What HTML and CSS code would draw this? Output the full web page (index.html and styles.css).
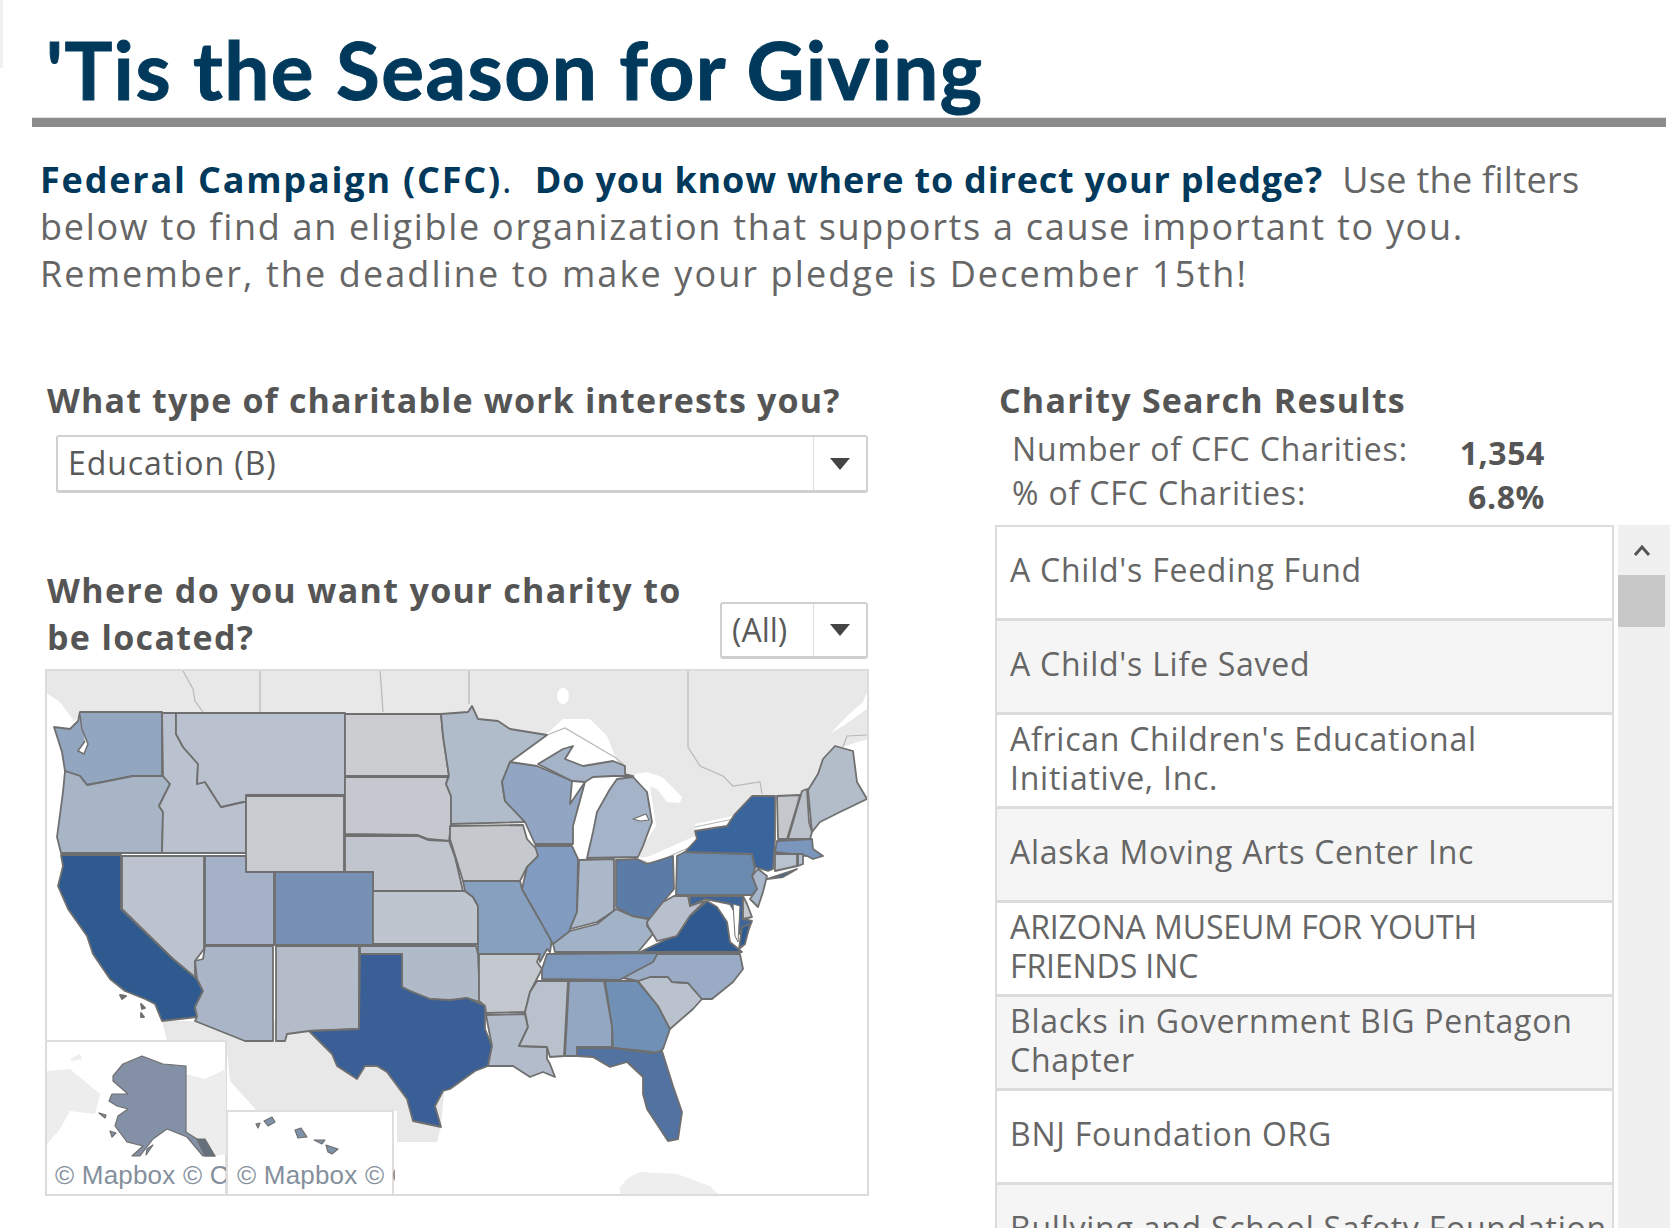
FILE: index.html
```html
<!DOCTYPE html>
<html lang="en">
<head>
<meta charset="utf-8">
<title>'Tis the Season for Giving</title>
<link rel="stylesheet" href="styles.css">
</head>
<body>
<div class="edge"></div>
<header class="top">
  <h1 class="title">'Tis the Season for Giving</h1>
  <div class="rule"></div>
  <p class="intro"><span class="l1"><strong class="s1">Federal Campaign (CFC)</strong><b class="dot">.</b>&nbsp; <strong class="s2">Do you know where to direct your pledge?</strong>&nbsp; Use the filters</span><br><span class="l2">below to find an eligible organization that supports a cause important to you.</span><br><span class="l3">Remember, the deadline to make your pledge is December 15th!</span></p>
</header>
<main class="columns">
  <section class="left">
    <h2 class="heading q1">What type of charitable work interests you?</h2>
    <div class="select wide"><span class="val">Education (B)</span><span class="btn"><i class="tri"></i></span></div>
    <div class="where">
      <h2 class="heading q2">Where do you want your charity to<br>be located?</h2>
      <div class="select small"><span class="val">(All)</span><span class="btn"><i class="tri"></i></span></div>
    </div>
    <div class="map">
      <svg class="mapsvg" viewBox="45 670 824 527" width="824" height="527" xmlns="http://www.w3.org/2000/svg">
        <g class="land">
          <polygon points="45,670 868,670 868,740 835,750 815,780 805,800 760,800 735,817 697,840 650,860 640,858 640,800 620,770 515,760 450,720 80,716 74,722 60,703 45,693"/>
          <polygon points="162,1022 450,1022 441,1128 437,1143 397,1143 397,1112 257,1112 230,1082 226,1042 167,1042"/>
          <polygon points="620,1188 628,1179 640,1173 677,1175 710,1187 718,1195 620,1195" class="faint"/>
        </g>
        <g class="water">
          <polygon points="515,760 550,732 563,720 590,720 607,737 615,757 620,770 560,770"/>
          <ellipse cx="563" cy="697" rx="6" ry="8"/>
          <polygon points="635,775 647,773 662,778 682,798 680,804 667,803 657,790 650,787 656,827 643,847"/>
          <polygon points="638,860 652,863 697,842 695,825 733,817 735,823 697,831 695,837 650,857"/>
          <polygon points="830,735 847,717 863,703 867,693 867,710 843,727"/>
        </g>
        <g class="borders">
          <polyline points="182,670 193,690 195,702 203,713"/>
          <polyline points="260,670 260,713"/>
          <polyline points="380,670 383,713"/>
          <polyline points="469,670 469,705"/>
          <polyline points="688,670 688,748 700,767 723,777 733,787 760,783 762,795"/>
          <polyline points="843,748 847,737 867,736"/>
          <polyline points="547,736 565,729 616,759 625,767"/>
          <polyline points="638,860 652,865 697,845" />
          <polyline points="695,828 733,820 736,815" />
        </g>
        <g class="states">
          <polygon fill="#92a6c0" points="54,728 70,730 78,722 80,713 162,713 162,777 133,777 103,783 87,786 80,777 65,772 62,753"/>
          <polyline class="sound" points="80,716 82,730 88,745 84,755 78,752 85,742"/>
          <polygon fill="#a7b5c7" points="65,772 80,777 87,786 103,783 133,777 163,777 170,785 159,807 163,813 162,854 61,854 57,838 63,793"/>
          <polygon fill="#b9c2ce" points="162,714 176,714 176,735 183,748 198,765 197,785 205,783 221,808 243,803 246,803 246,854 162,854 163,813 159,807 170,785 163,777"/>
          <polygon fill="#b8c1cd" points="176,714 345,714 345,796 246,796 246,803 243,803 221,808 205,783 197,785 198,765 183,748 176,735"/>
          <polygon fill="#c8cbd0" points="246,797 344,797 344,873 246,873"/>
          <polygon fill="#cbcdd1" points="345,715 441,715 443,737 449,777 345,777"/>
          <polygon fill="#c5c8cf" points="345,778 448,778 446,785 451,797 451,825 449,842 428,840 418,836 345,835"/>
          <polygon fill="#c0c5ce" points="345,837 418,837 428,841 449,842 455,858 463,892 373,892 373,873 345,873"/>
          <polygon fill="#7790b3" points="275,873 373,873 373,946 275,946"/>
          <polygon fill="#a5b1c6" points="205,857 246,857 246,873 274,873 274,946 205,946"/>
          <polygon fill="#bcc3ce" points="122,857 204,857 204,950 195,962 195,975 197,980 173,960 122,910"/>
          <polygon fill="#2e5a8f" points="61,856 121,856 121,910 173,960 197,980 203,992 195,1008 197,1018 162,1022 155,1005 145,1000 125,992 110,980 93,955 87,937 68,910 58,887 63,867"/>
          <polygon fill="#aab5c8" points="205,947 273,947 273,1042 245,1042 195,1022 197,1018 195,1008 203,992 197,980 195,962 203,960"/>
          <polygon fill="#b4bcc9" points="276,947 359,947 359,1030 309,1032 287,1035 285,1042 276,1042"/>
          <polygon fill="#b0bac8" points="360,947 476,947 478,955 480,1003 467,999 450,1002 430,1000 410,992 402,988 402,955 360,955"/>
          <polygon fill="#395f96" points="360,955 402,955 402,988 410,992 430,1000 450,1001 467,999 485,1007 485,1030 492,1047 488,1067 475,1072 450,1090 443,1092 435,1107 441,1128 413,1122 407,1100 387,1073 377,1067 365,1067 357,1080 337,1067 332,1055 309,1032 359,1030"/>
          <polygon fill="#bfc5cf" points="373,892 465,892 473,898 478,907 478,945 373,945"/>
          <polygon fill="#87a0c0" points="463,882 520,882 522,890 538,918 552,940 550,953 547,950 540,963 538,955 478,955 478,907 473,898 465,892"/>
          <polygon fill="#c5c9ce" points="450,827 523,826 527,840 539,853 537,863 527,868 520,882 463,882 450,840"/>
          <polygon fill="#b1bccb" points="441,715 468,713 472,707 478,720 498,722 510,730 547,736 510,763 502,783 505,802 525,823 451,825 451,797 446,785 449,777 443,737"/>
          <polygon fill="#92a6c3" points="510,763 537,767 572,782 570,805 585,783 573,827 573,845 535,845 525,823 505,802 502,783"/>
          <polygon fill="#a4b3c8" points="538,765 563,750 573,747 565,760 583,767 613,762 625,767 625,775 633,777 613,777 593,778 585,783 572,782"/>
          <polygon fill="#a4b3c8" points="617,780 633,778 647,793 652,823 643,847 638,858 587,859 593,833 597,813 610,790"/>
          <polygon class="notch" points="633,820 646,815 649,821 640,822"/>
          <polygon fill="#819cc0" points="535,847 572,847 578,860 577,913 570,930 567,943 553,945 538,918 522,890 527,868 538,857"/>
          <polygon fill="#aab8ca" points="579,861 614,860 614,912 597,923 570,930 577,913"/>
          <polygon fill="#5c7ca8" points="616,861 637,860 647,865 673,857 674,890 663,903 650,920 632,917 616,908"/>
          <polygon fill="#a2b3c8" points="616,910 632,917 648,920 647,927 653,935 638,953 570,953 555,953 553,945 570,932 597,925"/>
          <polygon fill="#b8c0cd" points="647,923 663,903 674,897 688,897 690,907 705,902 690,917 677,937 657,942 648,927"/>
          <polygon fill="#3f6498" points="690,897 743,897 743,920 752,922 745,940 740,935 736,915 730,905 705,900 690,907"/>
          <polygon fill="#2e5a90" points="640,953 667,940 677,937 690,917 707,902 717,908 727,923 730,943 742,953"/>
          <polygon fill="#c5c8cc" points="743,897 747,905 752,918 743,920"/>
          <polygon fill="#a7b6cb" points="752,877 758,870 767,877 763,893 758,908 750,900 757,890"/>
          <polygon fill="#6a8ab0" points="677,857 685,853 752,855 755,870 752,877 757,890 752,896 676,896"/>
          <polygon fill="#3a659c" points="685,853 697,840 695,832 727,827 735,815 752,797 775,797 775,840 773,870 768,872 755,868 752,855"/>
          <polygon fill="#3a659c" points="767,880 797,870 783,878"/>
          <polygon fill="#c4c7cb" points="777,797 800,796 797,807 787,840 778,840"/>
          <polygon fill="#bbc1ca" points="802,792 807,790 809,823 812,833 810,840 788,840"/>
          <polygon fill="#b3bdc9" points="808,791 818,775 823,760 835,747 853,752 857,783 867,800 840,813 820,823 812,833"/>
          <polygon fill="#7b96bc" points="777,842 812,840 813,850 823,857 813,860 807,857 775,853"/>
          <polygon fill="#b8c2cf" points="775,855 797,855 797,867 775,872"/>
          <polygon fill="#b3bece" points="798,855 803,855 803,865 798,867"/>
          <polygon fill="#c3c7ce" points="479,955 540,955 537,963 542,970 530,993 525,1013 486,1014 485,1007 479,1002"/>
          <polygon fill="#b3bccb" points="486,1016 525,1015 528,1028 519,1047 547,1048 547,1060 550,1065 555,1078 543,1073 530,1078 513,1067 488,1067 492,1047"/>
          <polygon fill="#b9c1cd" points="537,982 568,982 564,1057 550,1058 547,1048 519,1047 528,1028 525,1013 530,993"/>
          <polygon fill="#93a7c3" points="569,982 604,982 612,1027 612,1048 577,1048 578,1057 565,1057"/>
          <polygon fill="#7090b5" points="605,982 637,982 658,1007 670,1030 663,1050 653,1057 653,1053 613,1049 612,1027"/>
          <polygon fill="#5273a2" points="577,1049 613,1049 653,1054 662,1052 673,1087 682,1113 678,1140 668,1142 647,1110 643,1095 643,1078 627,1063 610,1068 593,1058 577,1057"/>
          <polygon fill="#bac2cd" points="638,982 650,978 668,978 672,983 688,984 702,1000 693,1010 670,1030 658,1007"/>
          <polygon fill="#99abc5" points="623,979 658,955 740,955 743,970 733,983 712,1000 702,1000 688,984 672,983 668,978 650,978 638,982"/>
          <polygon fill="#7d98bb" points="547,955 658,954 653,963 623,979 620,981 542,980 542,970"/>
          <polygon class="chesa" points="733,905 735,937 738,943 740,907"/>
          <polygon fill="#2e5a90" points="742,928 750,925 745,945 739,950"/>
          <polygon fill="#5c6470" points="120,996 126,997 122,1000"/>
          <polygon fill="#5c6470" points="141,1005 145,1009 142,1010"/>
          <polygon fill="#5c6470" points="141,1014 144,1018 141,1018"/>
        </g>
        <g class="inset">
          <rect x="46" y="1042" width="180" height="154"/>
          <rect x="227" y="1112" width="166" height="84"/>
        </g>
        <g class="land pale">
          <polygon points="47,1072 70,1070 100,1095 95,1115 70,1112 60,1130 47,1145"/>
          <polygon points="186,1075 205,1080 226,1070 226,1155 215,1157 186,1133"/>
          <polygon points="70,1060 80,1055 82,1060 72,1062"/>
        </g>
        <g class="states ak">
          <polygon fill="#8490a6" points="113,1077 123,1065 142,1057 163,1065 186,1067 186,1133 197,1140 215,1157 203,1157 187,1138 167,1130 153,1140 140,1157 132,1157 143,1147 127,1143 115,1127 118,1117 128,1110 117,1107 109,1102 112,1095 128,1095 113,1082"/>
          <polygon fill="#666f7c" points="197,1140 205,1140 215,1157 205,1157"/>
          <polygon fill="#7f92ac" points="264,1122 272,1118 275,1123 268,1127"/>
          <polygon fill="#7f92ac" points="256,1125 260,1124 258,1129"/>
          <polygon fill="#7f92ac" points="295,1131 301,1129 307,1138 298,1139"/>
          <polygon fill="#7f92ac" points="314,1141 325,1141 322,1145"/>
          <polygon fill="#7f92ac" points="326,1146 338,1150 332,1155 328,1153"/>
          <polygon fill="#7f92ac" points="99,1114 106,1116 105,1119"/>
          <polygon fill="#7f92ac" points="110,1132 116,1134 112,1138"/>
          <polygon fill="#7f92ac" points="147,1150 153,1146 146,1156"/>
        </g>
      </svg>
      <span class="credit one">© Mapbox © C</span>
      <span class="credit two">© Mapbox © C</span>
    </div>
  </section>
  <section class="right">
    <h2 class="heading results">Charity Search Results</h2>
    <dl class="stats">
      <dt>Number of CFC Charities:</dt><dd>1,354</dd>
      <dt>% of CFC Charities:</dt><dd>6.8%</dd>
    </dl>
    <div class="listwrap">
      <ul class="list">
        <li>A Child's Feeding Fund</li>
        <li>A Child's Life Saved</li>
        <li>African Children's Educational Initiative, Inc.</li>
        <li>Alaska Moving Arts Center Inc</li>
        <li class="caps">ARIZONA MUSEUM FOR YOUTH FRIENDS INC</li>
        <li>Blacks in Government BIG Pentagon Chapter</li>
        <li>BNJ Foundation ORG</li>
        <li>Bullying and School Safety Foundation</li>
      </ul>
      <div class="scroll">
        <div class="scrollbtn"><svg width="18" height="13" viewBox="0 0 18 13"><polyline points="2,11 9,3 16,11" fill="none" stroke="#555" stroke-width="3"/></svg></div>
        <div class="thumb"></div>
      </div>
    </div>
  </section>
</main>
</body>
</html>
```
FILE: styles.css
```css
html, body {
  margin: 0;
  height: 100vh;
  overflow: hidden;
  background: #fff;
  font-family: "Open Sans", "Lato", sans-serif;
}
.edge {
  position: absolute;
  left: 0;
  top: 0;
  width: 3px;
  height: 68px;
  background: #f1f1f1;
}
.top { display: block; }
.title {
  margin: 0;
  padding-left: 46px;
  height: 117px;
  box-sizing: border-box;
  padding-top: 21px;
  font-family: "Lato", "Open Sans", sans-serif;
  font-size: 80px;
  line-height: 96px;
  font-weight: 700;
  -webkit-text-stroke: 1px #00395b;
  letter-spacing: 1.5px;
  color: #00395b;
  white-space: nowrap;
}
.rule {
  height: 9px;
  margin: 0 4px 0 32px;
  background: #8c8c8c;
  border-top: 1px solid #e2e2e2;
}
.intro {
  margin: 29px 0 0 40px;
  font-size: 36px;
  line-height: 47px;
  color: #666;
  white-space: nowrap;
}
.intro strong { font-weight: 700; color: #00395b; }
.dot { font-weight: 400; color: #00395b; letter-spacing: 4px; }
.l1 { letter-spacing: 0.3px; }
.s1 { letter-spacing: 1.8px; }
.s2 { letter-spacing: 0.8px; }
.l2 { letter-spacing: 1.7px; }
.l3 { letter-spacing: 2.1px; }
.columns {
  display: flex;
  margin: 79px 0 0 45px;
}
.left { width: 825px; flex: none; }
.right { margin-left: 125px; width: 675px; flex: none; }
.heading {
  margin: 0 0 -1px;
  padding-top: 1px;
  font-size: 34px;
  line-height: 47px;
  font-weight: 700;
  color: #555;
  white-space: nowrap;
}
.q1 { padding-left: 2px; letter-spacing: 1.15px; }
.q2 { padding-left: 2px; letter-spacing: 1.35px; }
.results { padding-left: 4px; letter-spacing: 1.2px; }
.select {
  display: flex;
  box-sizing: border-box;
  height: 58px;
  border: 2px solid #d0d0d0;
  border-bottom-width: 3px;
  border-radius: 3px;
  background: #fff;
  color: #5a5a5a;
  font-size: 32px;
  align-items: stretch;
}
.wide { margin: 12px 2px 0 11px; }
.val {
  flex: 1;
  padding-left: 10px;
  line-height: 52px;
  letter-spacing: 0.95px;
}
.small .val { letter-spacing: 0; }
.btn {
  width: 52px;
  flex: none;
  display: flex;
  align-items: center;
  justify-content: center;
  border-left: 1px solid #ddd;
}
.tri {
  width: 0;
  height: 0;
  border-left: 10px solid transparent;
  border-right: 10px solid transparent;
  border-top: 12px solid #444;
}
.where {
  display: flex;
  justify-content: space-between;
  align-items: flex-start;
  margin-top: 73px;
}
.small { width: 148px; height: 57px; margin: 36px 2px 0 0; flex: none; }
.map {
  position: relative;
  margin-top: 9px;
  width: 824px;
  height: 527px;
}
.mapsvg { display: block; filter: blur(0.6px); }
.land polygon { fill: #e8e8e8; }
.land .faint { fill: #eeeeee; }
.pale polygon { fill: #ededed; }
.water polygon, .water ellipse { fill: #fff; }
.borders polyline { fill: none; stroke: #b8b8b8; stroke-width: 1.2; }
.states polygon { stroke: #6f6f6f; stroke-width: 1.8; stroke-linejoin: round; }
.states .sound { fill: #fff; stroke: #6f6f6f; stroke-width: 1.5; }
.states .notch { fill: #fff; stroke: #6f6f6f; stroke-width: 1.2; }
.states .chesa { fill: #fff; stroke: #6f6f6f; stroke-width: 1; }
.ak polygon { stroke-width: 1.2; }
.inset rect { fill: #fff; stroke: #dedede; stroke-width: 2; }
.map::after {
  content: "";
  position: absolute;
  inset: 0 0 0 0;
  border: 2px solid #dcdcdc;
  pointer-events: none;
}
.credit {
  position: absolute;
  top: 490px;
  font-family: "Liberation Sans", Arial, sans-serif;
  font-size: 26px;
  letter-spacing: 0.2px;
  line-height: 32px;
  color: #84909c;
  overflow: hidden;
  white-space: nowrap;
}
.one { left: 10px; width: 171px; }
.two { left: 192px; width: 158px; }
.stats {
  display: grid;
  grid-template-columns: 1fr auto;
  width: 533px;
  margin: 4px 0 10px 17px;
  font-size: 32px;
  line-height: 44px;
  color: #666;
}
.stats dt { margin: 0; letter-spacing: 0.85px; }
.stats dd {
  margin: 4px 0 -4px 0;
  justify-self: end;
  font-weight: 700;
  letter-spacing: 0.6px;
  color: #555;
}
.listwrap { display: flex; height: 720px; }
.list {
  list-style: none;
  margin: 0;
  padding: 0;
  width: 619px;
  flex: none;
  border-top: 2px solid #dcdcdc;
}
.list li {
  box-sizing: border-box;
  height: 94px;
  display: flex;
  align-items: center;
  padding: 0 4px 6px 13px;
  font-size: 32px;
  line-height: 39px;
  letter-spacing: 0.75px;
  color: #666;
  background: #fff;
  border-left: 2px solid #dcdcdc;
  border-right: 2px solid #dcdcdc;
  border-bottom: 3px solid #dcdcdc;
}
.list li:nth-child(even) { background: #f5f5f5; }
.list .caps { letter-spacing: -0.1px; padding-right: 100px; }
.scroll {
  margin-left: 4px;
  flex: 1;
  background: #f0f0f0;
}
.scrollbtn {
  height: 50px;
  display: flex;
  align-items: center;
  justify-content: center;
  padding-right: 5px;
}
.thumb {
  height: 52px;
  margin-right: 5px;
  background: #c8c8c8;
}
```
